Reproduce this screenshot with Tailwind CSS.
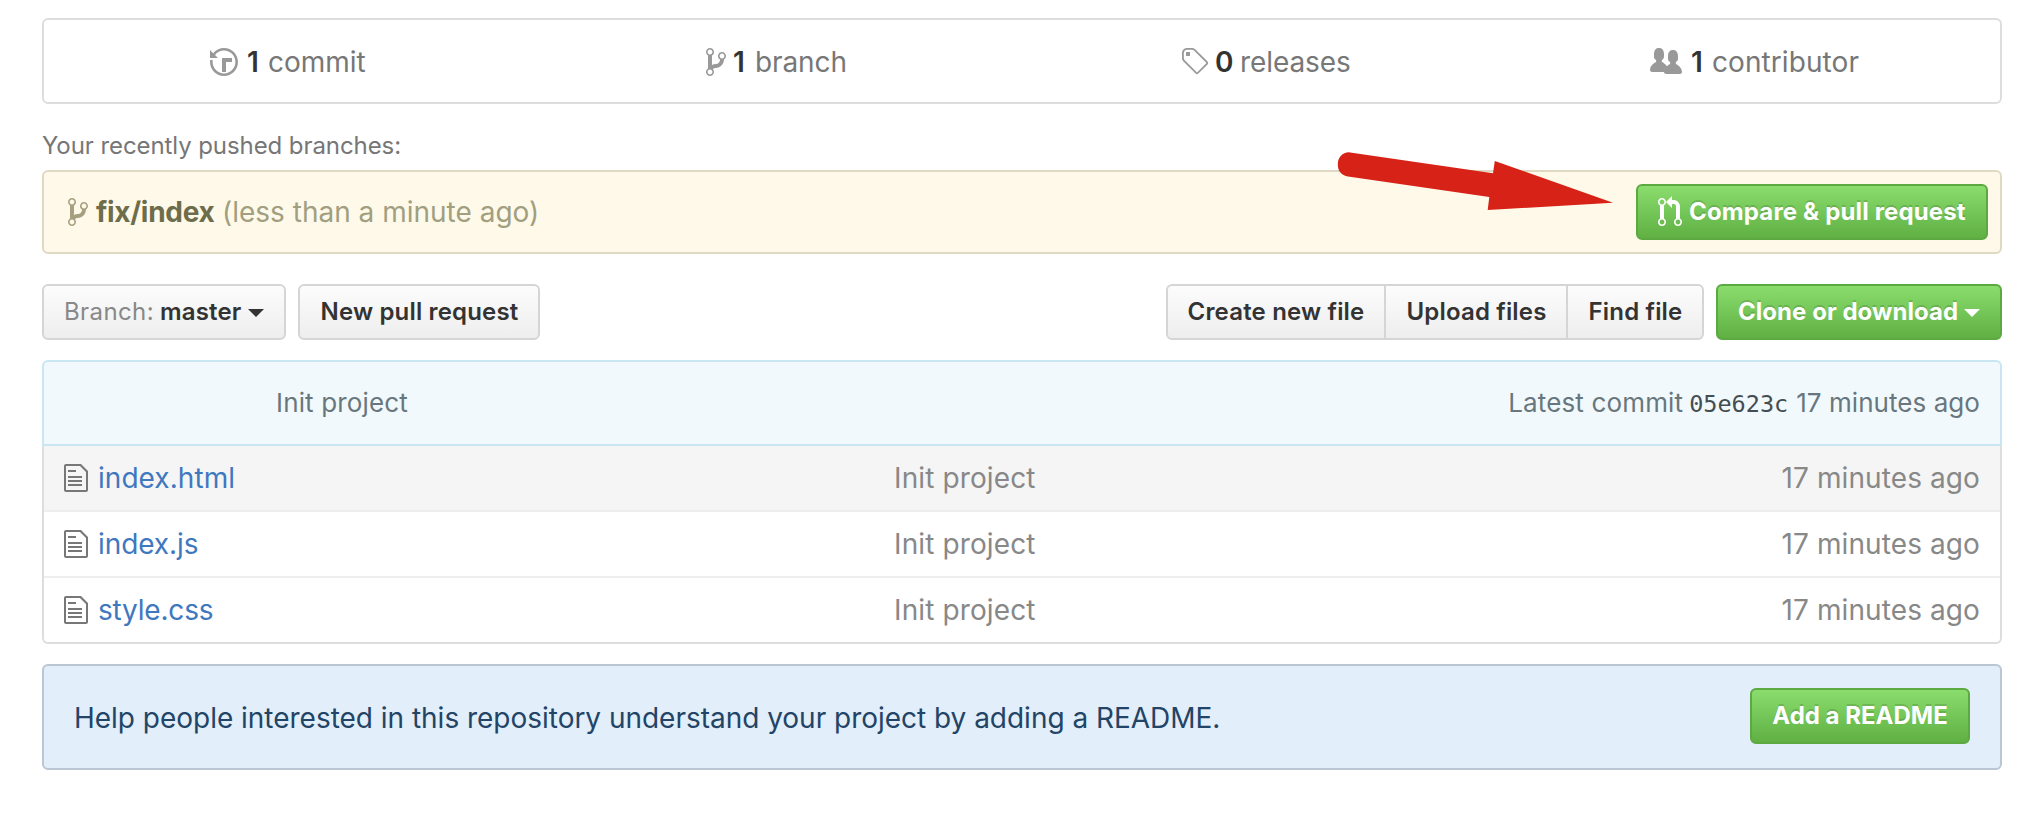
<!DOCTYPE html>
<html lang="en">
<head>
<meta charset="utf-8">
<title>Repository</title>
<script src="https://cdn.jsdelivr.net/npm/@tailwindcss/browser@4"></script>
</head>
<body class="bg-white font-['Inter',sans-serif] overflow-hidden">
<svg class="hidden">
  <symbol id="history" viewBox="0 0 14 16"><path d="M8 13H6V6h5v2H8v5zM7 1C4.81 1 2.87 2.02 1.59 3.59L0 2v4h4L2.5 4.5C3.55 3.17 5.17 2.3 7 2.3c3.14 0 5.7 2.56 5.7 5.7s-2.56 5.7-5.7 5.7A5.71 5.71 0 0 1 1.3 8c0-.34.03-.67.09-1H.08C.03 7.33 0 7.66 0 8c0 3.86 3.14 7 7 7s7-3.14 7-7-3.14-7-7-7z"/></symbol>
  <symbol id="branch" viewBox="0 0 10 16"><path d="M10 5c0-1.11-.89-2-2-2a1.993 1.993 0 0 0-1 3.72v.3c-.02.52-.23.98-.63 1.38-.4.4-.86.61-1.38.63-.83.02-1.48.16-2 .45V4.72a1.993 1.993 0 0 0-1-3.72C.88 1 0 1.89 0 3a2 2 0 0 0 1 1.72v6.56c-.59.35-1 .99-1 1.72 0 1.11.89 2 2 2 1.11 0 2-.89 2-2 0-.53-.2-1-.53-1.36.09-.06.48-.41.59-.47.25-.11.56-.17.94-.17 1.05-.05 1.95-.45 2.75-1.25S8.95 7.77 9 6.73h-.02C9.59 6.37 10 5.73 10 5zM2 1.8c.66 0 1.2.55 1.2 1.2 0 .65-.55 1.2-1.2 1.2C1.35 4.2.8 3.65.8 3c0-.65.55-1.2 1.2-1.2zm0 12.41c-.66 0-1.2-.55-1.2-1.2 0-.65.55-1.2 1.2-1.2.65 0 1.2.55 1.2 1.2 0 .65-.55 1.2-1.2 1.2zm6-8c-.66 0-1.2-.55-1.2-1.2 0-.65.55-1.2 1.2-1.2.65 0 1.2.55 1.2 1.2 0 .65-.55 1.2-1.2 1.2z"/></symbol>
  <symbol id="tag" viewBox="0 0 14 16"><path transform="translate(0 -1)" d="M6.73 2.73c-.47-.47-1.11-.73-1.77-.73H2.5C1.13 2 0 3.13 0 4.5v2.47c0 .66.27 1.3.73 1.77l6.06 6.06c.39.39 1.02.39 1.41 0l4.59-4.59a.996.996 0 0 0 0-1.41L6.73 2.73zM1.38 8.09c-.31-.3-.47-.7-.47-1.13V4.5c0-.88.72-1.59 1.59-1.59h2.47c.42 0 .83.16 1.13.47l6.14 6.13-4.73 4.73-6.13-6.15zM2.01 4h2v2H2V4h.01z"/></symbol>
  <symbol id="people" viewBox="0 0 16 16"><path d="M16 12.999c0 .439-.45 1-1 1H7.995c-.539 0-.994-.447-.995-.999H1c-.54 0-1-.561-1-1 0-2.634 3-4 3-4s.229-.409 0-1c-.841-.621-1.058-.59-1-3 .058-2.419 1.367-3 2.5-3s2.442.58 2.5 3c.058 2.41-.159 2.379-1 3-.229.59 0 1 0 1s1.549.711 2.42 2.088C9.196 9.369 10 8.999 10 8.999s.229-.409 0-1c-.841-.62-1.058-.59-1-3 .058-2.419 1.367-3 2.5-3s2.437.581 2.495 3c.059 2.41-.158 2.38-1 3-.229.59 0 1 0 1s3.005 1.366 3.005 4"/></symbol>
  <symbol id="pull" viewBox="0 0 12 16"><path d="M11 11.28V5c-.03-.78-.34-1.47-.94-2.06C9.46 2.35 8.78 2.03 8 2H7V0L4 3l3 3V4h1c.27.02.48.11.69.31.21.2.3.42.31.69v6.28A1.993 1.993 0 0 0 10 15a1.993 1.993 0 0 0 1-3.72zm-1 2.92c-.66 0-1.2-.55-1.2-1.2 0-.65.55-1.2 1.2-1.2.65 0 1.2.55 1.2 1.2 0 .65-.55 1.2-1.2 1.2zM4 3c0-1.11-.89-2-2-2a1.993 1.993 0 0 0-1 3.72v6.56A1.993 1.993 0 0 0 2 15a1.993 1.993 0 0 0 1-3.72V4.72c.59-.34 1-.98 1-1.72zm-.8 10c0 .66-.55 1.2-1.2 1.2-.65 0-1.2-.55-1.2-1.2 0-.65.55-1.2 1.2-1.2.65 0 1.2.55 1.2 1.2zM2 4.2C1.34 4.2.8 3.65.8 3c0-.65.55-1.2 1.2-1.2.65 0 1.2.55 1.2 1.2 0 .65-.55 1.2-1.2 1.2z"/></symbol>
  <symbol id="file" viewBox="0 0 12 16"><path d="M6 5H2V4h4v1zM2 8h7V7H2v1zm0 2h7V9H2v1zm0 2h7v-1H2v1zm10-7.5V14c0 .55-.45 1-1 1H1c-.55 0-1-.45-1-1V2c0-.55.45-1 1-1h7.5L12 4.5zM11 5L8 2H1v12h10V5z"/></symbol>
</svg>

<main class="relative flex flex-col pt-[18px] pl-[42px] pr-5 whitespace-nowrap text-[28px]">

  <!-- Repository numbers -->
  <ul class="grid grid-cols-4 h-[86px] border-2 border-[#ddd] rounded-md pt-[2px] text-[#777]">
    <li class="flex items-center pl-[166px]">
      <svg class="w-7 h-8 fill-[#999]"><use href="#history"/></svg>
      <b class="ml-[9px] w-[21px] font-semibold text-[#333]">1</b><span>commit</span>
    </li>
    <li class="flex items-center pl-[173px]">
      <svg class="w-5 h-8 fill-[#999]"><use href="#branch"/></svg>
      <b class="ml-[7px] w-[22px] font-semibold text-[#333]">1</b><span class="tracking-[-0.1px]">branch</span>
    </li>
    <li class="flex items-center pl-[160px]">
      <svg class="w-7 h-8 fill-[#999]"><use href="#tag"/></svg>
      <b class="ml-[5px] w-[25px] font-semibold text-[#333]">0</b><span class="tracking-[-0.08px]">releases</span>
    </li>
    <li class="flex items-center pl-[139px]">
      <svg class="w-8 h-8 fill-[#999]"><use href="#people"/></svg>
      <b class="ml-[9px] w-[21px] font-semibold text-[#333]">1</b><span class="tracking-[0.08px]">contributor</span>
    </li>
  </ul>

  <!-- Recently pushed branch -->
  <h2 class="mt-[27px] mb-[9px] h-[30px] text-2xl/[30px] tracking-[-0.08px] text-[#767676]">Your recently pushed branches:</h2>
  <section class="flex items-center h-[84px] border-2 border-[#dfd8c2] rounded-md bg-[#fff9ea] pl-6 pr-3 text-[#a19f7f]">
    <svg class="w-5 h-8 fill-[#a6a080]"><use href="#branch"/></svg>
    <b class="ml-[8px] w-[126px] font-bold tracking-[-0.3px] text-[#6d6d4b]">fix/index</b>
    <span>(less than a minute ago)</span>
    <button class="ml-auto flex items-center w-[352px] h-14 pl-5 border-2 border-[#5ca941] rounded-md bg-linear-to-b from-[#8add6d] to-[#60b044] text-2xl font-bold text-white tracking-[0.15px] [text-shadow:0_-2px_0_rgba(0,0,0,0.15)]">
      <svg class="w-6 h-8 mr-[7px] fill-white"><use href="#pull"/></svg>Compare &amp; pull request
    </button>
  </section>

  <!-- Toolbar -->
  <nav class="mt-[30px] flex h-14 text-2xl font-semibold tracking-[0.17px] text-[#333]">
    <button class="flex items-center w-[244px] pl-5 border-2 border-[#d5d5d5] rounded-md bg-linear-to-b from-[#fcfcfc] to-[#eee]">
      <span class="w-[96px] text-left font-normal tracking-[0.4px] text-[#888]">Branch:</span>
      <span class="w-[88px] text-left">master</span>
      <span class="mt-px border-x-8 border-t-8 border-x-transparent border-t-[#333]"></span>
    </button>
    <button class="ml-3 w-[242px] pl-px border-2 border-[#d5d5d5] rounded-md bg-linear-to-b from-[#fcfcfc] to-[#eee]">New pull request</button>
    <div class="ml-auto flex border-2 border-[#d5d5d5] rounded-md bg-linear-to-b from-[#fcfcfc] to-[#eee]">
      <button class="w-[218px] border-r-2 border-[#d5d5d5]">Create new file</button>
      <button class="w-[182px] pl-px border-r-2 border-[#d5d5d5]">Upload files</button>
      <button class="w-[134px] pl-px">Find file</button>
    </div>
    <button class="ml-3 flex items-center w-[286px] pl-5 border-2 border-[#5ca941] rounded-md bg-linear-to-b from-[#8add6d] to-[#60b044] font-bold text-white tracking-[0.04px] [text-shadow:0_-2px_0_rgba(0,0,0,0.15)]">
      <span class="w-[226px] text-left">Clone or download</span>
      <span class="mt-px border-x-8 border-t-8 border-x-transparent border-t-white"></span>
    </button>
  </nav>

  <!-- Files -->
  <section class="mt-5">
    <header class="flex items-center justify-between h-[86px] border-2 border-[#c9e6f2] rounded-t-md bg-[#f2f9fc] pl-[232px] pr-5 text-[26px] text-[#68777d]">
      <span class="pb-px tracking-[0.15px]">Init project</span>
      <p class="flex items-baseline pb-px"><span class="w-[181px] tracking-[0.15px]">Latest commit</span><code class="w-[107px] font-['DejaVu_Sans_Mono',monospace] text-[23.5px] text-[#444d51]">05e623c</code><span class="tracking-[0.06px]">17 minutes ago</span></p>
    </header>
    <div class="border-x-2 border-b-2 border-[#ddd] rounded-b-md text-[#888] divide-y-2 divide-[#eee]">
      <div class="flex items-center h-[66px] pl-5 pr-5 bg-[#f5f5f5]">
        <svg class="w-6 h-8 fill-[#777]"><use href="#file"/></svg>
        <a class="ml-[10px] w-[796px] tracking-[0.05px] text-[#4078c0]">index.html</a>
        <span class="tracking-[0.12px]">Init project</span>
        <span class="ml-auto tracking-[0.1px]">17 minutes ago</span>
      </div>
      <div class="flex items-center h-[66px] pl-5 pr-5">
        <svg class="w-6 h-8 fill-[#777]"><use href="#file"/></svg>
        <a class="ml-[10px] w-[796px] tracking-[-0.08px] text-[#4078c0]">index.js</a>
        <span class="tracking-[0.12px]">Init project</span>
        <span class="ml-auto tracking-[0.1px]">17 minutes ago</span>
      </div>
      <div class="flex items-center h-16 pl-5 pr-5">
        <svg class="w-6 h-8 fill-[#777]"><use href="#file"/></svg>
        <a class="ml-[10px] w-[796px] tracking-[-0.2px] text-[#4078c0]">style.css</a>
        <span class="tracking-[0.12px]">Init project</span>
        <span class="ml-auto tracking-[0.1px]">17 minutes ago</span>
      </div>
    </div>
  </section>

  <!-- README prompt -->
  <section class="mt-5 flex items-start justify-between h-[106px] border-2 border-[#bac6d3] rounded-md bg-[#e2eef9] pl-[30px] pr-[30px] text-[#224466]">
    <p class="pt-[31px] leading-[42px] tracking-[-0.02px]">Help people interested in this repository understand your project by adding a README.</p>
    <button class="mt-[22px] w-[220px] h-14 border-2 border-[#5ca941] rounded-md bg-linear-to-b from-[#8add6d] to-[#60b044] text-2xl font-bold text-white [text-shadow:0_-2px_0_rgba(0,0,0,0.15)]">Add a README</button>
  </section>

  <!-- Annotation arrow -->
  <svg class="absolute left-[1336px] top-[150px] w-[280px] h-[62px] fill-[#d62217]" viewBox="1336 150 280 62">
    <path d="M1350 152.400 1493 173.200 1494.800 161 1613 202.700 1487.700 210 1489.300 197 1348 176.400C1341.500 175.500 1337.800 171 1337.800 164.500 1337.800 157 1343 151.800 1350 152.400z"/>
  </svg>
</main>
</body>
</html>
